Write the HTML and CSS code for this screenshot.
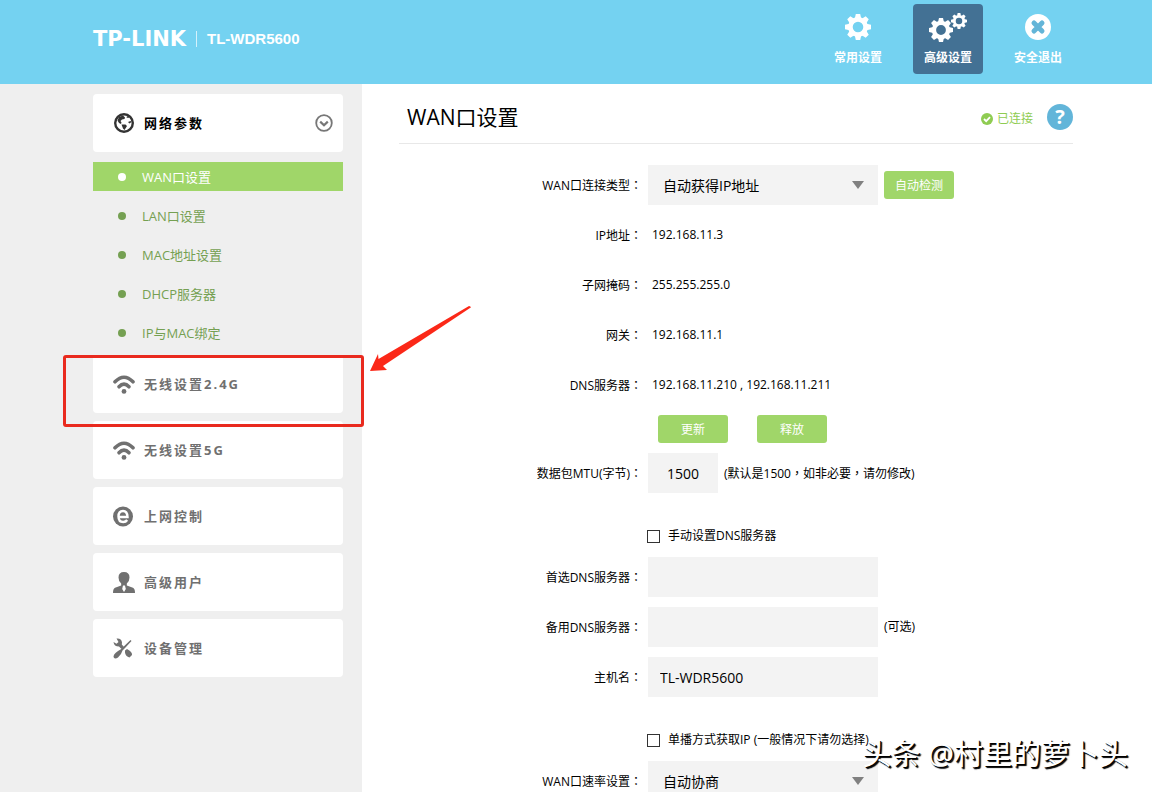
FILE: index.html
```
<!DOCTYPE html>
<html lang="zh-CN">

<head>
    <meta charset="UTF-8">
    <meta name="viewport" content="width=device-width, initial-scale=1.0">
    <title>TL-WDR5600</title>
    <link rel="stylesheet" href="styles.css">
</head>

<body>
    <svg class="defs" aria-hidden="true">
        <symbol id="gear" viewBox="-13 -13 26 26">
            <circle r="7.600" fill="none" stroke="currentColor" stroke-width="4.600" />
            <g fill="currentColor">
                <g id="teeth">
                    <path id="tooth" d="M-3.2 -8.5L-2.2 -13H2.2L3.2 -8.5Z" />
                    <use href="#tooth" transform="rotate(45)" />
                    <use href="#tooth" transform="rotate(90)" />
                    <use href="#tooth" transform="rotate(135)" />
                </g>
                <use href="#teeth" transform="rotate(180)" />
            </g>
        </symbol>
        <symbol id="wifi" viewBox="0 0 22 20">
            <g fill="none" stroke="currentColor" stroke-width="3.600" stroke-linecap="round">
                <path d="M2 7.8Q11 -1.4 20 7.8" />
                <path d="M6 12.800Q11 7.4 16 12.800" />
            </g>
            <circle cx="11" cy="17.400" r="2.400" fill="currentColor" />
        </symbol>
    </svg>

    <header class="header">
        <div class="brand">
            <span class="logo">TP-LINK</span>
            <span class="model">TL-WDR5600</span>
        </div>
        <nav class="top-nav">
            <a href="#">
                <svg width="26" height="26"><use href="#gear" /></svg>
                常用设置
            </a>
            <a href="#" class="active">
                <svg width="38" height="30" viewBox="0 0 38 30">
                    <use href="#gear" x="0" y="6" width="24" height="24" />
                    <use href="#gear" x="22" y="1" width="16" height="16" />
                </svg>
                高级设置
            </a>
            <a href="#">
                <svg width="26" height="26" viewBox="0 0 26 26">
                    <circle cx="13" cy="13" r="13" fill="#fff" />
                    <path d="M9 9L17 17M17 9L9 17" stroke="#63b5d8" stroke-width="5" stroke-linecap="round" />
                </svg>
                安全退出
            </a>
        </nav>
    </header>

    <div class="page">
        <aside class="sidebar">
            <ul class="menu">
                <li class="open">
                    <a href="#" class="menu-item">
                        <svg width="22" height="22" viewBox="0 0 22 22">
                            <circle cx="11" cy="11" r="8.8" fill="none" stroke="#333" stroke-width="2.4" />
                            <path d="M10 3.500L6 5L4.500 8.500L6 11L8 12L8.500 10.500L7.500 9L9 7.500L11.500 7L12 5.500Z M14 4L13.500 5.500L15.500 6L16 5Z M15 10L16.500 11.500L18.500 10L17.500 9Z M8.500 12.500L12.500 12.500L14 14L11.500 18L10 16.500Z" fill="#333" />
                        </svg>
                        <span>网络参数</span>
                        <svg class="chevron" width="18" height="18" viewBox="0 0 18 18" fill="none" stroke="#777" stroke-width="1.8">
                            <circle cx="9" cy="9" r="7.800" />
                            <path d="M5.200 7.600L9 11.200L12.800 7.600" stroke-width="2.200" />
                        </svg>
                    </a>
                    <ul class="submenu">
                        <li><a href="#" class="active">WAN口设置</a></li>
                        <li><a href="#">LAN口设置</a></li>
                        <li><a href="#">MAC地址设置</a></li>
                        <li><a href="#">DHCP服务器</a></li>
                        <li><a href="#">IP与MAC绑定</a></li>
                    </ul>
                </li>
                <li class="marked">
                    <a href="#" class="menu-item">
                        <svg width="22" height="20"><use href="#wifi" /></svg>
                        <span>无线设置2.4G</span>
                    </a>
                    <svg class="arrow" width="102" height="66" viewBox="0 0 102 66">
                        <path d="M1 65L9 48L9.500 53L100 0Q103 1 101 2L14 60L18 64Z" fill="#fb2818" />
                    </svg>
                </li>
                <li>
                    <a href="#" class="menu-item">
                        <svg width="22" height="20"><use href="#wifi" /></svg>
                        <span>无线设置5G</span>
                    </a>
                </li>
                <li>
                    <a href="#" class="menu-item">
                        <svg width="22" height="22" viewBox="0 0 22 22">
                            <circle cx="10" cy="11.500" r="10" fill="currentColor" />
                            <path d="M5.500 12H14.500Q14.300 6 10 6Q5.500 6 5.500 11.500Q5.500 17 10.200 17Q12.800 17 14.200 15" fill="none" stroke="#fff" stroke-width="2.400" />
                        </svg>
                        <span>上网控制</span>
                    </a>
                </li>
                <li>
                    <a href="#" class="menu-item">
                        <svg width="22" height="22" viewBox="0 0 22 22">
                            <path d="M11 1Q5.500 1 5.500 6.500Q5.500 10.500 8.200 12.500V14.500L2 16.800Q0 17.800 0 22H22Q22 17.800 20 16.800L13.800 14.500V12.500Q16.500 10.500 16.500 6.500Q16.500 1 11 1Z" fill="currentColor" />
                            <path d="M10 14.500H12L12.800 18L11 21L9.200 18Z" fill="#fff" />
                        </svg>
                        <span>高级用户</span>
                    </a>
                </li>
                <li>
                    <a href="#" class="menu-item">
                        <svg width="22" height="22" viewBox="0 0 22 22">
                            <path d="M3.500 1.500Q8.500 1 9 5.500L8.800 7.500L11 10L8.500 12L6 9.500Q1 9.500 .5 5L3.500 6.800L5.500 5Z" fill="currentColor" />
                            <path d="M12 13.500L14 12Q19.500 15 19 18L16.500 20.500Q12.500 19.500 12 15.500Z" fill="currentColor" />
                            <path d="M17.500 3L18.500 4L12.500 10.500L9.500 13.500Q8.500 17.500 5 20.500Q2 22.500 .8 20.500Q-.2 18.500 2.500 16Q5 13.500 7.500 12.500L11 9.200Z" fill="currentColor" />
                        </svg>
                        <span>设备管理</span>
                    </a>
                </li>
            </ul>
        </aside>

        <main class="content">
            <div class="title-bar">
                <h1>WAN口设置</h1>
                <div class="status">
                    <svg width="12" height="12" viewBox="0 0 12 12">
                        <circle cx="6" cy="6" r="6" fill="#8fcc52" />
                        <path d="M3 6L5.200 8.200L9 4.200" fill="none" stroke="#fff" stroke-width="1.800" />
                    </svg>
                    已连接
                </div>
                <button type="button" class="help" aria-label="帮助">?</button>
            </div>

            <form class="form">
                <div class="row">
                    <label class="label" for="wan-type">WAN口连接类型<span lang="zh-TW" class="punct">：</span></label>
                    <div class="select">
                        <select id="wan-type">
                            <option>自动获得IP地址</option>
                        </select>
                    </div>
                    <button type="button" class="btn">自动检测</button>
                </div>
                <div class="row">
                    <span class="label">IP地址<span lang="zh-TW" class="punct">：</span></span>
                    <span class="value">192.168.11.3</span>
                </div>
                <div class="row">
                    <span class="label">子网掩码<span lang="zh-TW" class="punct">：</span></span>
                    <span class="value">255.255.255.0</span>
                </div>
                <div class="row">
                    <span class="label">网关<span lang="zh-TW" class="punct">：</span></span>
                    <span class="value">192.168.11.1</span>
                </div>
                <div class="row">
                    <span class="label">DNS服务器<span lang="zh-TW" class="punct">：</span></span>
                    <span class="value">192.168.11.210 , 192.168.11.211</span>
                </div>
                <div class="actions">
                    <button type="button" class="btn">更新</button>
                    <button type="button" class="btn">释放</button>
                </div>
                <div class="row">
                    <label class="label" for="mtu">数据包MTU(字节)<span lang="zh-TW" class="punct">：</span></label>
                    <input type="text" id="mtu" class="text short" value="1500">
                    <span>(默认是1500<span lang="zh-TW" class="punct">，</span>如非必要<span lang="zh-TW" class="punct">，</span>请勿修改)</span>
                </div>
                <div class="check">
                    <input type="checkbox" id="manual-dns">
                    <label for="manual-dns">手动设置DNS服务器</label>
                </div>
                <div class="row">
                    <label class="label" for="dns1">首选DNS服务器<span lang="zh-TW" class="punct">：</span></label>
                    <input type="text" id="dns1" class="text">
                </div>
                <div class="row">
                    <label class="label" for="dns2">备用DNS服务器<span lang="zh-TW" class="punct">：</span></label>
                    <input type="text" id="dns2" class="text">
                    <span>(可选)</span>
                </div>
                <div class="row">
                    <label class="label" for="host">主机名<span lang="zh-TW" class="punct">：</span></label>
                    <input type="text" id="host" class="text" value="TL-WDR5600">
                </div>
                <div class="check">
                    <input type="checkbox" id="unicast">
                    <label for="unicast">单播方式获取IP (一般情况下请勿选择)</label>
                </div>
                <div class="row">
                    <label class="label" for="wan-rate">WAN口速率设置<span lang="zh-TW" class="punct">：</span></label>
                    <div class="select">
                        <select id="wan-rate">
                            <option>自动协商</option>
                        </select>
                    </div>
                </div>
            </form>
        </main>
    </div>

    <div class="watermark">头条 @村里的萝卜头</div>
</body>

</html>
```
FILE: styles.css
```
* {
    box-sizing: border-box;
}

body {
    font-family: "Open Sans", "Noto Sans CJK SC", sans-serif;
    font-size: 12px;
    line-height: 20px;
    color: #000;
    background-color: #fff;
    margin: 0;
    height: 100vh;
    display: flex;
    flex-direction: column;
    overflow: hidden;
    position: relative;
}

ul {
    list-style: none;
    margin: 0;
    padding: 0;
}

a {
    text-decoration: none;
}

button, input, select {
    font-family: inherit;
}

.defs {
    position: absolute;
    width: 0;
    height: 0;
}

/* header */
.header {
    flex: none;
    height: 84px;
    padding: 4px 79px 0 93px;
    background-color: #74d2f1;
    display: flex;
    justify-content: space-between;
}

.brand {
    display: flex;
    align-items: center;
    height: 70px;
    color: #fff;
    font-weight: bold;
}

.logo {
    font-family: "DejaVu Sans", sans-serif;
    font-size: 21px;
    width: 103px;
}

.model {
    font-family: "Liberation Sans", sans-serif;
    font-size: 15px;
    line-height: 16px;
    padding-left: 10px;
    border-left: 1px solid #d4f1fb;
}

.top-nav {
    display: flex;
    gap: 20px;
}

.top-nav a {
    width: 70px;
    height: 70px;
    padding-bottom: 6px;
    border-radius: 4px;
    color: #fff;
    font-weight: bold;
    display: flex;
    flex-direction: column;
    align-items: center;
    justify-content: flex-end;
    gap: 8px;
}

.top-nav a.active {
    background-color: #437194;
    gap: 6px;
}

/* sidebar */
.page {
    flex: 1;
    min-height: 0;
    display: flex;
}

.sidebar {
    flex: none;
    width: 362px;
    padding: 10px 19px 0 93px;
    background-color: #efefef;
}

.menu {
    display: flex;
    flex-direction: column;
    gap: 8px;
}

.menu-item {
    height: 58px;
    padding: 0 10px 0 20px;
    background-color: #fff;
    border-radius: 4px;
    color: #707070;
    font-size: 13px;
    font-weight: bold;
    letter-spacing: 2px;
    display: flex;
    align-items: center;
    gap: 9px;
}

.open .menu-item {
    color: #000;
}

.chevron {
    margin-left: auto;
}

.submenu {
    padding-top: 10px;
    display: flex;
    flex-direction: column;
    gap: 10px;
}

.submenu a {
    height: 29px;
    padding-left: 25px;
    color: #75a052;
    font-size: 13px;
    display: flex;
    align-items: center;
    gap: 16px;
}

.submenu a::before {
    content: '';
    width: 8px;
    height: 8px;
    border-radius: 50%;
    background-color: currentColor;
}

.submenu a.active {
    background-color: #a0d669;
    color: #fff;
}

/* hand-drawn mark over the 2.4G entry */
.marked {
    position: relative;
    z-index: 1;
}

.marked::after {
    content: '';
    position: absolute;
    top: 0;
    left: -30px;
    right: -21px;
    bottom: -14px;
    border: 3px solid #e92a1e;
    border-radius: 3px;
    pointer-events: none;
}

.arrow {
    position: absolute;
    left: 276px;
    top: -49px;
}

/* content */
.content {
    flex: 1;
    min-width: 0;
    padding: 0 79px 0 37px;
}

.title-bar {
    height: 60px;
    padding: 6px 0 0 8px;
    border-bottom: 1px solid #e8e8e8;
    display: flex;
    align-items: center;
}

h1 {
    margin: 0 auto 0 0;
    font-size: 21px;
    line-height: 30px;
    font-weight: normal;
}

.status {
    padding-top: 4px;
    display: flex;
    align-items: center;
    gap: 4px;
    color: #8fcc52;
}

.help {
    width: 26px;
    height: 26px;
    margin-left: 14px;
    padding: 0;
    border: none;
    border-radius: 50%;
    background-color: #62b5d9;
    color: #fff;
    font-size: 20px;
    line-height: 26px;
    font-weight: bold;
}

.form {
    padding-top: 21px;
    display: flex;
    flex-direction: column;
    gap: 10px;
}

.row {
    height: 40px;
    display: flex;
    align-items: center;
    gap: 6px;
    white-space: nowrap;
}

.label {
    width: 243px;
    flex: none;
    text-align: right;
}

/* full-width marks sit in the middle of their cell */
.punct {
    font-family: "Noto Sans CJK TC", sans-serif;
}

.value {
    padding-left: 4px;
}

.select {
    position: relative;
}

.select::after {
    content: '';
    position: absolute;
    top: 16px;
    right: 14px;
    border: 6px solid transparent;
    border-top: 8px solid #808080;
    border-bottom: none;
    pointer-events: none;
}

select, .text {
    display: block;
    width: 230px;
    height: 40px;
    border: none;
    border-radius: 0;
    background-color: #f3f3f3;
    color: #000;
    font-size: 14px;
    padding: 0 12px;
}

select {
    appearance: none;
    padding: 0 15px;
}

.text.short {
    width: 70px;
    text-align: center;
}

.btn {
    width: 70px;
    height: 28px;
    padding: 0;
    border: none;
    border-radius: 3px;
    background-color: #a0d669;
    color: #fff;
    font-size: 12px;
}

.actions {
    padding-left: 259px;
    display: flex;
    gap: 29px;
}

.check {
    height: 44px;
    padding: 22px 0 0 248px;
    display: flex;
    align-items: center;
    gap: 8px;
}

.check input {
    appearance: none;
    width: 13px;
    height: 13px;
    margin: 0;
    border: 1px solid #333;
    background-color: #fff;
}

.watermark {
    position: absolute;
    right: 24px;
    bottom: 18px;
    color: #fff;
    font-size: 29px;
    line-height: 40px;
    text-shadow: 1px 1px 0 #000, 2px 2px 1px #000;
}
```
